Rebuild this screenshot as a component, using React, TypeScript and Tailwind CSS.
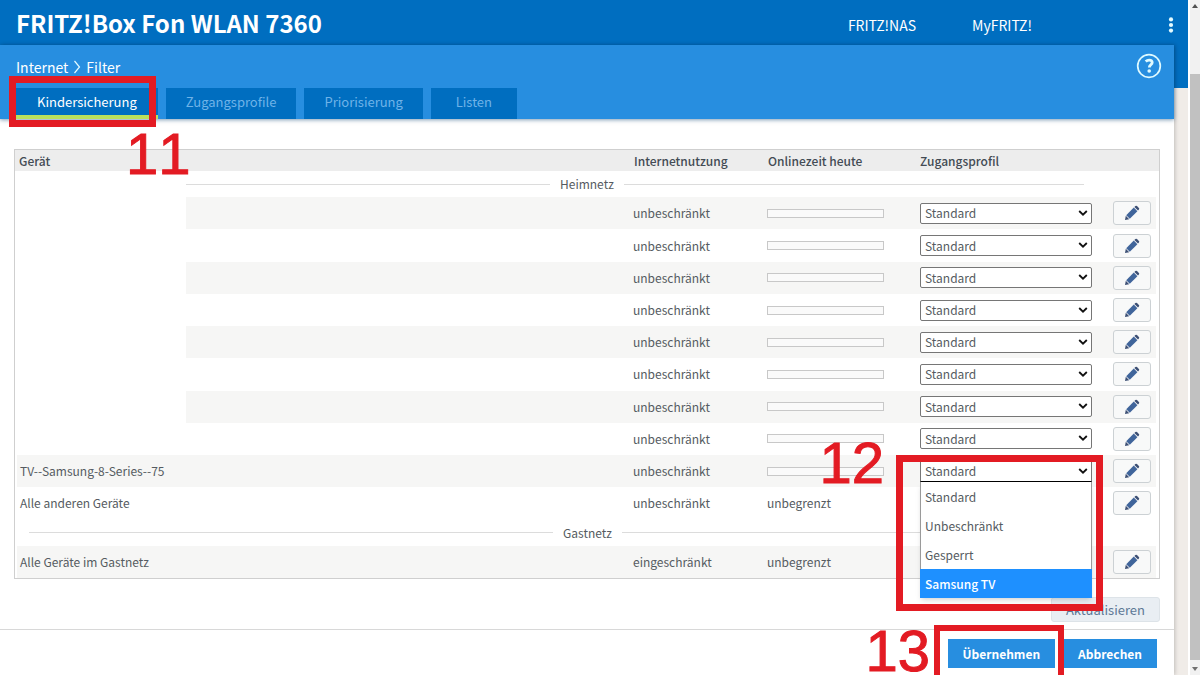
import { useState } from "react";

type Row = { name?: string; usage: string; online?: string; open?: boolean; hidden?: boolean };

const profiles = ["Standard", "Unbeschränkt", "Gesperrt", "Samsung TV"];
const tabs = ["Zugangsprofile", "Priorisierung", "Listen"];

const homeRows: Row[] = [
    ...Array.from({ length: 8 }, () => ({ usage: "unbeschränkt" })),
    { name: "TV--Samsung-8-Series--75", usage: "unbeschränkt", open: true },
    { name: "Alle anderen Geräte", usage: "unbeschränkt", online: "unbegrenzt", hidden: true },
];
const guestRows: Row[] = [{ name: "Alle Geräte im Gastnetz", usage: "eingeschränkt", online: "unbegrenzt", hidden: true }];

function Pencil() {
    return (
        <svg viewBox="0 0 16 16" className="h-4 w-4">
            <path d="M1 15l.8-4.2 3.4 3.4z" fill="#3c4f74" />
            <path d="M2.2 10.2l7.6-7.6 3.6 3.6-7.6 7.6z" fill="#40659b" />
            <path d="M10.4 2l1-.9q.8-.7 1.6 0l1.9 1.9q.7.8 0 1.6l-.9 1z" fill="#3c4f74" />
        </svg>
    );
}

function Step({ n, className }: { n: string; className: string }) {
    return <span className={`pointer-events-none absolute z-20 font-['Liberation_Sans',sans-serif] text-[58px] font-normal leading-[60px] text-[#e31b23] [-webkit-text-stroke:1px_#e31b23] [font-kerning:none] ${className}`}>{n}</span>;
}

function ProfileSelect({ label, open }: { label: string; open?: boolean }) {
    const [value, setValue] = useState("Standard");
    return (
        <div className="relative w-[172px]">
            <select aria-label={label} value={value} onChange={(e) => setValue(e.target.value)} className={`block h-[21px] w-full appearance-none border bg-white px-1 text-xs leading-[18px] ${open ? "border-[#767676] border-b-black" : "rounded-xs border-[#767676]"}`}>
                {profiles.map((p) => <option key={p}>{p}</option>)}
            </select>
            <svg viewBox="0 0 10 6" className="pointer-events-none absolute right-1 top-[7px] h-1.5 w-2.5"><path d="M1.2 1l3.8 3.7L8.8 1" fill="none" stroke="#111" strokeWidth="1.8" /></svg>
            {open && (
                <>
                    <ul role="listbox" aria-label="Zugangsprofile" className="absolute left-0 top-[21px] z-10 w-full border-x border-[#9a9a9a] bg-white shadow-md">
                        {profiles.map((p) => (
                            <li key={p} role="option" aria-selected={p === "Samsung TV"} className={`h-[29px] px-1 leading-[29px] ${p === "Samsung TV" ? "-mx-px bg-[#1e90ff] pl-[5px] font-medium text-white" : ""}`}>{p}</li>
                        ))}
                    </ul>
                    <div className="pointer-events-none absolute -left-6 -right-[11px] -top-1.5 z-20 h-[156px] border-[7px] border-[#e31b23]" />
                    <Step n="12" className="right-[208px] -top-7" />
                </>
            )}
        </div>
    );
}

function GroupRow({ title, indent }: { title: string; indent?: boolean }) {
    return (
        <tr className="h-[26px]">
            <th colSpan={6} scope="colgroup" className="pr-[75px] pl-[14px] font-normal">
                <div className={`flex items-center gap-2.5 ${indent ? "pl-[157px]" : ""}`}>
                    <span className={`h-px bg-[#dcdcdc] ${indent ? "w-[364px]" : "w-[524px]"}`} />
                    <span className="leading-5">{title}</span>
                    <span className="h-px flex-1 bg-[#dcdcdc]" />
                </div>
            </th>
        </tr>
    );
}

function DeviceRow({ row, shaded, index }: { row: Row; shaded: boolean; index: number }) {
    const bg = shaded ? "bg-[#f6f6f5]" : "bg-white";
    const label = row.name ?? `Gerät ${index + 1}`;
    return (
        <tr className="h-8">
            <td className={`border-l-2 border-white pl-[3px] ${row.name ? bg : "bg-white"}`}>{row.name}</td>
            <td className={bg} />
            <td className={`pl-[3px] ${bg}`}>{row.usage}</td>
            <td className={`pl-[3px] ${bg}`}>{row.online ?? <div className="h-[9px] w-[117px] border border-[#c8c8c8] bg-[#fafafa]" />}</td>
            <td className={`pl-1 ${bg}`}>{!row.hidden && <ProfileSelect label={`Zugangsprofil ${label}`} open={row.open} />}</td>
            <td className={`border-r-[3px] border-white pl-[5px] ${bg}`}>
                <button aria-label={`${label} bearbeiten`} className="flex h-6 w-[38px] items-center justify-center rounded-[3px] border border-[#ccd1d4] bg-[#f8f9f9]"><Pencil /></button>
            </td>
        </tr>
    );
}

export default function App() {
    return (
        <div className="flex min-h-screen overflow-hidden bg-white font-['Noto_Sans_CJK_SC','Noto_Sans',sans-serif] text-[13px] leading-5 text-[#555b61]">
            <div className="flex min-w-0 flex-1 flex-col">
                <header className="flex h-[45px] items-center bg-[#006ec0] pl-4 pr-[14px] text-white">
                    <h1 className="flex-1 text-2xl font-bold leading-8">FRITZ!Box Fon WLAN 7360</h1>
                    <nav className="flex items-center gap-14 pt-1 text-sm">
                        <a href="#nas">FRITZ!NAS</a>
                        <a href="#myfritz">MyFRITZ!</a>
                    </nav>
                    <button aria-label="Menü" className="ml-[136px] pt-1">
                        <svg viewBox="0 0 6 16" className="h-4 w-1.5" fill="#e4fbff"><circle cx="3" cy="2.4" r="2.1" /><circle cx="3" cy="8" r="2.1" /><circle cx="3" cy="13.6" r="2.1" /></svg>
                    </button>
                </header>
                <div className="flex flex-1">
                    <main className="z-10 flex min-w-0 flex-1 flex-col bg-white shadow-[1px_0_4px_rgba(0,0,0,0.2)]">
                        <section className="flex h-[74px] flex-col justify-between bg-[#278ee0] text-white shadow-[0_1px_4px_rgba(0,60,110,0.5)]">
                            <div className="flex items-start justify-between pl-4 pr-3 pt-2">
                                <div className="flex items-center gap-[5px] pt-1 text-sm">
                                    <a href="#internet">Internet</a>
                                    <svg viewBox="0 0 8 14" className="h-3.5 w-2"><path d="M1.5 1l5 6-5 6" fill="none" stroke="#e4fbff" strokeWidth="1.2" /></svg>
                                    <span>Filter</span>
                                </div>
                                <button aria-label="Hilfe">
                                    <svg viewBox="0 0 26 26" className="h-[26px] w-[26px]" fill="none" stroke="#dffaff">
                                        <circle cx="13" cy="13" r="11.3" strokeWidth="1.7" />
                                        <path d="M9.7 8.6Q11.2 7.1 13.2 7.1q3 0 3 2.4c0 2.2-2.9 2.5-2.9 5" strokeWidth="2.8" />
                                        <circle cx="13.2" cy="18" r="1.8" fill="#dffaff" stroke="none" />
                                    </svg>
                                </button>
                            </div>
                            <nav className="flex gap-2 pl-4">
                                <div className="relative">
                                    <a href="#kindersicherung" className="block h-[31px] border-b-4 border-[#b9e05c] bg-[#006ec0] px-[21px] leading-[27px]">Kindersicherung</a>
                                    <div className="pointer-events-none absolute -left-[7px] right-0.5 -top-3 z-20 h-[51px] border-[7px] border-[#e31b23]" />
                                    <Step n="11" className="left-[110px] top-9" />
                                </div>
                                {tabs.map((t) => <a key={t} href={`#${t}`} className="block h-[31px] min-w-[86px] bg-[#006ec0] px-5 text-center leading-[27px] text-[#6fb3e8]">{t}</a>)}
                            </nav>
                        </section>

                        <div className="px-[14px] pt-[30px]">
                            <table className="h-[430px] w-full table-fixed border-separate border-spacing-0 border border-[#cfcfcf] text-left text-xs leading-5">
                                <colgroup>
                                    <col className="w-[171px]" /><col /><col className="w-[134px]" /><col className="w-[152px]" /><col className="w-[192px]" /><col className="w-[51px]" />
                                </colgroup>
                                <thead>
                                    <tr className="h-[21px] bg-[#ededed] text-[#434b54] [&>th]:font-medium">
                                        <th colSpan={2} className="pl-1">Gerät</th>
                                        <th className="pl-1">Internetnutzung</th>
                                        <th className="pl-1">Onlinezeit heute</th>
                                        <th className="pl-1">Zugangsprofil</th>
                                        <th aria-label="Bearbeiten" />
                                    </tr>
                                </thead>
                                <tbody>
                                    <GroupRow title="Heimnetz" indent />
                                    {homeRows.map((r, i) => <DeviceRow key={i} row={r} index={i} shaded={i % 2 === 0} />)}
                                    <GroupRow title="Gastnetz" />
                                    {guestRows.map((r, i) => <DeviceRow key={i} row={r} index={i} shaded />)}
                                </tbody>
                            </table>
                            <div className="flex justify-end pb-[7px] pt-[18px]">
                                <button className="h-[25px] rounded-[3px] border border-[#dde3e8] bg-[#e9eef3] px-[14px] text-[#5d7896]">Aktualisieren</button>
                            </div>
                        </div>

                        <footer className="flex flex-1 items-start justify-end gap-2 border-t border-[#d8d8d8] pr-[17px] pt-[9px] text-xs font-bold text-white">
                            <div className="relative">
                                <button className="h-[29px] bg-[#278ee0] px-[15px]">Übernehmen</button>
                                <div className="pointer-events-none absolute -left-[14px] -right-[9px] -top-[14px] z-20 h-[57px] border-[6px] border-[#e31b23]" />
                                <Step n="13" className="right-[125px] -top-[18px]" />
                            </div>
                            <button className="h-[29px] bg-[#278ee0] px-[15px]">Abbrechen</button>
                        </footer>
                    </main>
                    <div className="flex w-[14px] flex-col bg-[#f0ece8]"><div className="h-[43px] bg-[#006ec0]" /></div>
                </div>
            </div>
            <div aria-hidden="true" className="flex w-3 flex-col items-center border-l-2 border-white bg-[#f1f1f1]">
                <svg viewBox="0 0 10 12" className="h-3 w-2.5"><path d="M2 8l3-4 3 4z" fill="#505050" /></svg>
                <div className="mb-px mt-[62px] w-full flex-1 bg-[#c1c1c1]" />
                <svg viewBox="0 0 10 14" className="h-3.5 w-2.5"><path d="M2 6l3 4 3-4z" fill="#707070" /></svg>
            </div>
        </div>
    );
}
